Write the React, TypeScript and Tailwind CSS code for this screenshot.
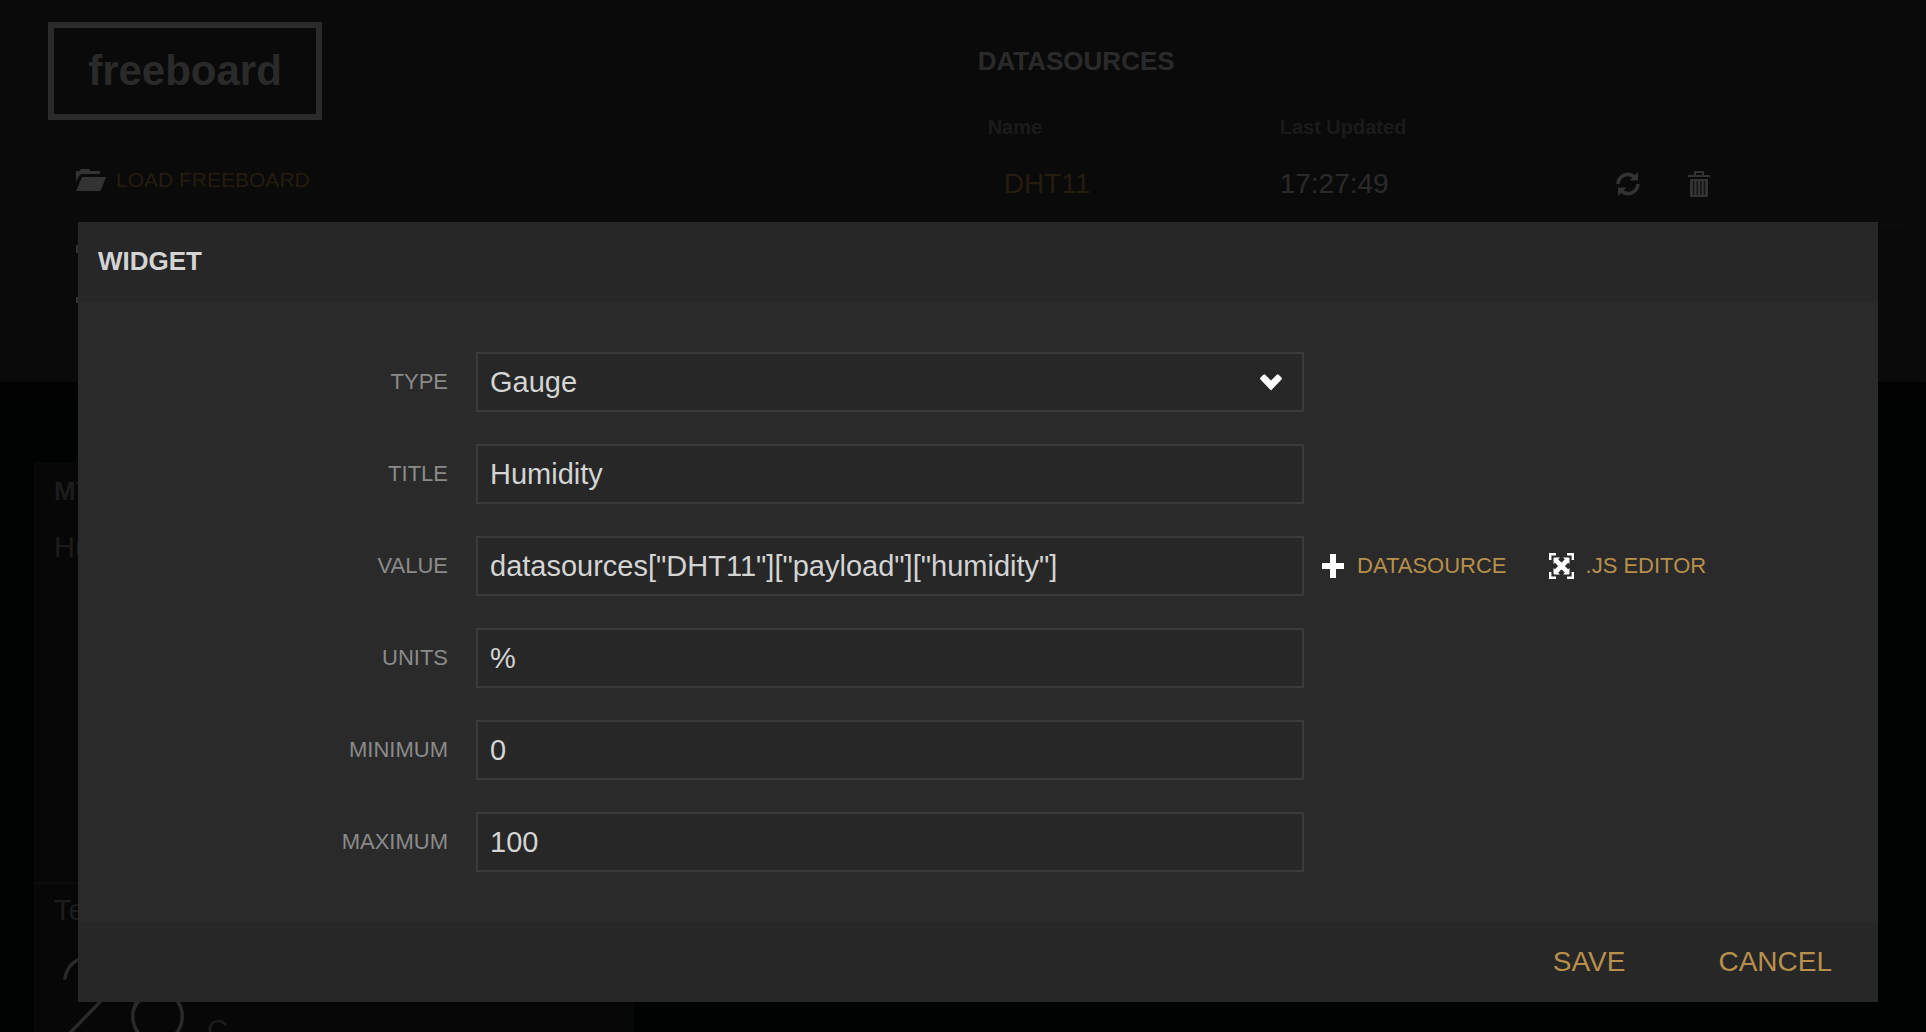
import React from "react";

const SANS = "font-['Liberation_Sans',Arial,sans-serif]";

function FolderOpenIcon() {
  return (
    <svg width="30" height="22" viewBox="0 0 30 22" fill="currentColor" aria-hidden="true">
      <path d="M0 13V2h4V1l1-1h8l1 1v1h9q1 0 1 1v2H6q-2 0-3 2z" />
      <path d="M7 8h23l-5 13q-.4 1-1.400 1H0L5.500 9q.4-1 1.500-1z" />
    </svg>
  );
}

function SaveIcon() {
  return (
    <svg width="26" height="26" viewBox="0 0 26 26" fill="currentColor" aria-hidden="true">
      <path d="M10 0h6v9h5l-8 8-8-8h5z" />
      <path d="M0 18h4v4h18v-4h4v8H0z" />
    </svg>
  );
}

function PlusIcon() {
  return (
    <svg width="22" height="24" viewBox="0 0 22 24" fill="currentColor" aria-hidden="true">
      <path d="M8 0h6v9h8v6h-8v9H8v-9H0V9h8z" />
    </svg>
  );
}

function RefreshIcon() {
  return (
    <svg width="24" height="24" viewBox="0 0 24 24" aria-hidden="true">
      <g>
        <path d="M2 12A10 10 0 0 1 18 4.500" fill="none" stroke="currentColor" strokeWidth="3.600" />
        <path d="M22 0v8.500h-8.500z" fill="currentColor" />
      </g>
      <g transform="rotate(180 12 12)">
        <path d="M2 12A10 10 0 0 1 18 4.500" fill="none" stroke="currentColor" strokeWidth="3.600" />
        <path d="M22 0v8.500h-8.500z" fill="currentColor" />
      </g>
    </svg>
  );
}

function TrashIcon() {
  return (
    <svg width="22" height="26" viewBox="0 0 22 26" aria-hidden="true">
      <path d="M0 4h6V1q0-1 1-1h8q1 0 1 1v3h6v2H0zM8 2v2h6V2z" fill="currentColor" fillRule="evenodd" />
      <path d="M2 8h18v17q0 1-1 1H3q-1 0-1-1z" fill="currentColor" />
      <path d="M5.500 10v14M9.200 10v14M12.900 10v14M16.500 10v14" stroke="#151515" strokeWidth="1.400" />
    </svg>
  );
}

function ExpandIcon() {
  return (
    <svg width="25" height="26" viewBox="0 0 25 26" fill="none" stroke="currentColor" aria-hidden="true">
      <path d="M1.200 7V1.200H7M18 1.200h5.800V7M23.800 19v5.800H18M7 24.800H1.200V19" strokeWidth="2.400" />
      <path d="M6.500 7l12 12M18.500 7l-12 12" strokeWidth="4.600" />
      <path d="M4.500 11V5.500q0-1 1-1H11zM14 4.500h5.500q1 0 1 1V11zM20.500 15v5.500q0 1-1 1H14zM11 21.500H5.500q-1 0-1-1V15z" fill="currentColor" stroke="none" />
    </svg>
  );
}

function ChevronIcon() {
  return (
    <svg width="22" height="17" viewBox="0 0 22 17" fill="currentColor" aria-hidden="true">
      <path d="M.5 5.500Q-.3 4.500.5 3.600L3.400.7q.9-.8 1.800 0L11 6.600 16.800.7q.9-.8 1.800 0l2.900 2.900q.8.900 0 1.900L11 16.600z" />
    </svg>
  );
}

const FIELD =
  "h-[60px] w-full appearance-none rounded-none border-2 border-[#3b3b3b] bg-[#272727] px-3 text-[29px] leading-9 text-[#d3d4d4] outline-none";

function Row({ id, label, children, extra }: { id: string; label: string; children: React.ReactNode; extra?: React.ReactNode }) {
  return (
    <div className="flex items-center">
      <label htmlFor={id} className="w-[370px] shrink-0 text-right text-[22px] leading-7 text-[#8b8b8b]">
        {label}
      </label>
      <div className="relative ml-7 w-[46%]">{children}</div>
      {extra}
    </div>
  );
}

function TextRow({ id, label, value, extra }: { id: string; label: string; value: string; extra?: React.ReactNode }) {
  return (
    <Row id={id} label={label} extra={extra}>
      <input id={id} type="text" defaultValue={value} className={FIELD} />
    </Row>
  );
}

function AdminBar() {
  return (
    <header className="flex h-[382px] items-start bg-[#0a0a0a] pr-[18px] pl-12 shadow-[0_4px_8px_#000]">
      <div className="w-[48.8%] pt-[22px]">
        <h1 className="flex h-[98px] w-[274px] items-center justify-center border-6 border-[#2a2a2a] text-[42px] leading-none font-bold text-[#2a2a2a]">
          freeboard
        </h1>
        <nav className="mt-[46px] flex flex-col items-start gap-8 pl-7 text-[#333]">
          <button type="button" className="flex h-7 items-center gap-[10px]">
            <FolderOpenIcon />
            <span className="text-[21px] leading-7 text-[#251c10]">LOAD FREEBOARD</span>
          </button>
          <button type="button" aria-label="Save" className="flex h-7 items-center">
            <SaveIcon />
          </button>
          <button type="button" aria-label="Add pane" className="flex h-7 items-center">
            <PlusIcon />
          </button>
        </nav>
      </div>
      <section className="min-w-0 flex-1 pt-[45px]">
        <h2 className="pl-[22px] text-[26px] leading-8 font-bold text-[#2a2a2a]">DATASOURCES</h2>
        <table className="mt-[34px] w-full table-fixed border-collapse text-left">
          <thead>
            <tr className="text-[20px] leading-8 text-[#1b1b1b]">
              <th className="w-[324px] pl-8">Name</th>
              <th className="w-[336px]">Last Updated</th>
              <th aria-label="Actions" />
            </tr>
          </thead>
          <tbody>
            <tr className="h-[82px] border-b-2 border-[#0c0c0c] text-[28px] leading-9">
              <td className="pl-12">
                <a href="#dht11" className="text-[#251c10]">DHT11</a>
              </td>
              <td className="text-[#2a2a2a]">17:27:49</td>
              <td className="text-[#333]">
                <div className="flex items-center gap-12">
                  <button type="button" aria-label="Refresh"><RefreshIcon /></button>
                  <button type="button" aria-label="Delete"><TrashIcon /></button>
                </div>
              </td>
            </tr>
          </tbody>
        </table>
      </section>
    </header>
  );
}

function Board() {
  return (
    <main className="px-[34px] pt-20">
      <section className="h-[640px] w-[600px] bg-[#070707] text-[#1c1c1c]">
        <h2 className="px-5 pt-[11px] text-[26px] leading-9 font-bold">MY</h2>
        <div className="h-[373px] px-5 pt-5 text-[29px] leading-9">Hu</div>
        <div className="border-t-2 border-[#0b0b0b] pt-2 text-[29px] leading-9">
          <div className="px-5">Te</div>
          <div className="flex items-end gap-4 px-5">
            <span className="font-[Lato,sans-serif] text-[118px] leading-[136px] font-extralight text-[#2a2a2a] [-webkit-text-stroke:2px_#2a2a2a]">26</span>
            <span className="pb-4">C</span>
          </div>
        </div>
      </section>
    </main>
  );
}

function WidgetDialog() {
  return (
    <form
      role="dialog"
      aria-labelledby="dialog-title"
      onSubmit={(e) => e.preventDefault()}
      className="absolute top-[222px] right-12 left-[78px] bg-[#2a2a2a]"
    >
      <header className="flex h-20 items-center bg-[#272727] px-5 pb-[2px]">
        <h2 id="dialog-title" className="text-[26px] leading-8 font-bold text-[#d3d4d4]">WIDGET</h2>
      </header>
      <div className="flex flex-col gap-8 py-[50px]">
        <Row id="type" label="TYPE">
          <select id="type" defaultValue="Gauge" className={FIELD}>
            <option>Gauge</option>
          </select>
          <span className="pointer-events-none absolute inset-y-0 right-[22px] flex items-center text-white">
            <ChevronIcon />
          </span>
        </Row>
        <TextRow id="title" label="TITLE" value="Humidity" />
        <TextRow
          id="value"
          label="VALUE"
          value={'datasources["DHT11"]["payload"]["humidity"]'}
          extra={
            <div className="ml-[18px] flex items-center gap-[42px] text-[22px] leading-7 whitespace-nowrap text-[#b88f4b]">
              <button type="button" className="flex items-center gap-[13px]">
                <span className="text-white"><PlusIcon /></span>
                DATASOURCE
              </button>
              <button type="button" className="flex items-center gap-3">
                <span className="text-white"><ExpandIcon /></span>
                .JS EDITOR
              </button>
            </div>
          }
        />
        <TextRow id="units" label="UNITS" value="%" />
        <TextRow id="minimum" label="MINIMUM" value="0" />
        <TextRow id="maximum" label="MAXIMUM" value="100" />
      </div>
      <footer className="flex h-20 items-center justify-end gap-[93px] bg-[#272727] pr-[46px] text-[28px] leading-9 text-[#b88f4b]">
        <button type="submit">SAVE</button>
        <button type="button">CANCEL</button>
      </footer>
    </form>
  );
}

export default function App() {
  return (
    <div className={`relative h-screen overflow-hidden bg-[#000201] ${SANS}`}>
      <AdminBar />
      <Board />
      <WidgetDialog />
    </div>
  );
}
